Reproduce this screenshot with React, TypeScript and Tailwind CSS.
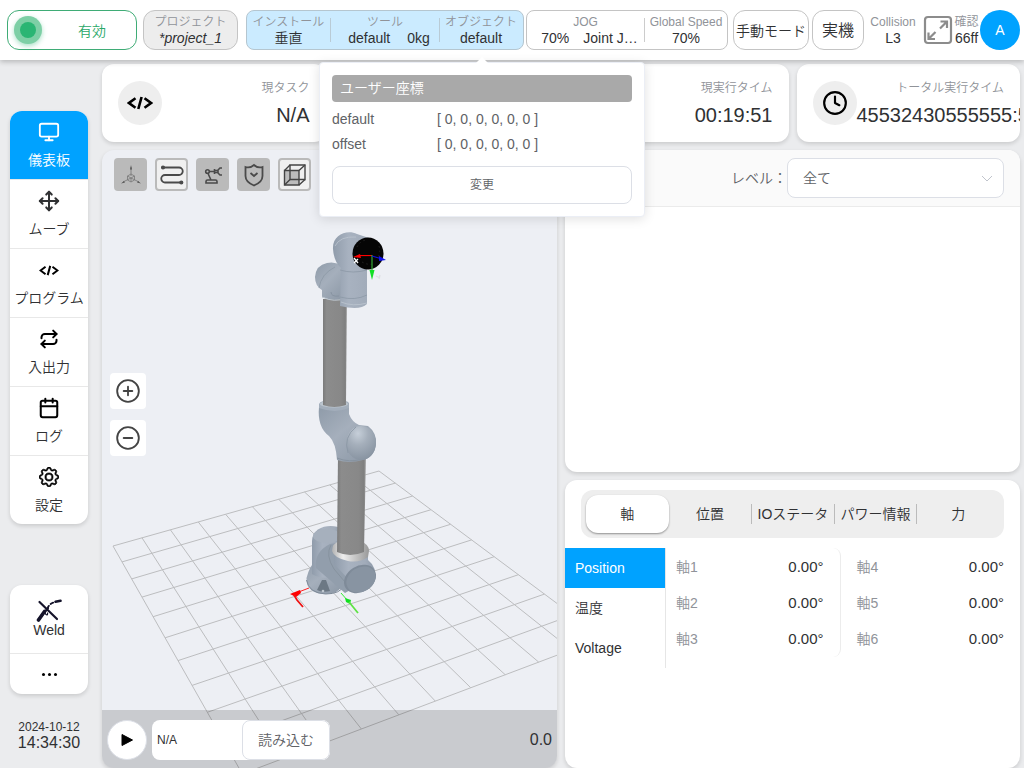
import type { ReactNode } from "react";
import { Monitor, Move, Repeat, Calendar, Clock, CirclePlus, CircleMinus } from "lucide-react";
import { BsGear } from "react-icons/bs";

function CodeIcon({ className }: { className: string }) {
  return (
    <svg viewBox="0 0 26 14" className={className} fill="none" stroke="currentColor" strokeWidth="2.6">
      <path d="M8.500 2.200 2 7l6.500 4.800M17.500 2.200 24 7l-6.500 4.800M14.600 1 11.300 13" />
    </svg>
  );
}

function WeldIcon() {
  return (
    <svg viewBox="0 0 26 23" className="h-[23px] w-[26px]" fill="none" stroke="#15142b" strokeLinecap="round">
      <path d="m2.500 21 6-8.500" strokeWidth="3.600" />
      <path d="M9 14c1.500 3 3 2 2.500 0" strokeWidth="1.200" />
      <path d="M11.500 9.500c1.500-4 4-5.500 7.500-6.500" strokeWidth="1.800" strokeDasharray="3 2.500" />
      <path d="m19.500 2.800 5-1" strokeWidth="2.600" />
      <path d="m3.500 3 17.500 17M2.500 20.500 12 9" strokeWidth="2.200" />
    </svg>
  );
}

function ExpandIcon() {
  return (
    <svg viewBox="0 0 30 30" className="h-[30px] w-[30px] shrink-0" fill="none" stroke="#8c8c8c" strokeWidth="2.200">
      <rect x="2" y="2" width="26" height="26" rx="3" />
      <path d="M17.500 6.500h6.500v6.500M24 6.500l-7 7M5.500 17.500v6.500h6.500M5.500 24l7-7" />
    </svg>
  );
}

function AxesIcon() {
  return (
    <svg viewBox="0 0 24 24" className="h-6 w-6" fill="none" stroke="#777" strokeWidth=".8">
      <path d="M12 13V4M12 15l-8 4M12 15l8 4" />
      <path d="m12 11 3.500 2v4L12 19l-3.500-2v-4zM8.500 13l3.500 2 3.500-2M12 15v4" />
      <path d="m12 2-1 4.500h2zM2 20.500l4-1-1-1.600zM22 20.500l-4-1 1-1.600z" fill="#555" stroke="none" />
    </svg>
  );
}

function PathIcon() {
  return (
    <svg viewBox="0 0 24 24" className="h-6 w-6" fill="none" stroke="#4a4a4a" strokeWidth="1.800">
      <path d="M3 4.500h16a3.400 3.400 0 0 1 0 7.500H5a3.400 3.400 0 0 0 0 7.500h16" />
      <circle cx="3" cy="4.500" r="1.200" fill="#4a4a4a" />
      <circle cx="21.300" cy="19.500" r="1.200" fill="#4a4a4a" />
    </svg>
  );
}

function ArmIcon() {
  return (
    <svg viewBox="0 0 24 24" className="h-6 w-6" fill="none" stroke="#4a4a4a" strokeWidth="1.600">
      <circle cx="6.500" cy="8.500" r="1.800" />
      <path d="M8.500 8.500h4.500M13.500 6v5M14 7.500h2.500M14 9.500h2.500M21 5h-2l-2 2v3l2 2h2M7 10.500 10 17M5 20v-1.500q0-1.500 1.500-1.500h8q1.500 0 1.500 1.500v1.500z" />
    </svg>
  );
}

function ShieldIcon() {
  return (
    <svg viewBox="0 0 24 24" className="h-6 w-6" fill="none" stroke="#4a4a4a" strokeWidth="1.800">
      <path d="M3.500 4q4.500 1.500 8.500-2 4 3.500 8.500 2v9q0 6-8.500 9.500Q3.500 19 3.500 13z" />
      <path d="m8.500 10 3.500 3 3.500-3" />
    </svg>
  );
}

function CubeIcon() {
  return (
    <svg viewBox="0 0 24 24" className="h-6 w-6" fill="none" stroke="#444" strokeWidth="1.400">
      <path d="M1.500 7.500h14.500v14.500H1.500z" fill="#999" fillOpacity=".6" />
      <path d="M7 2h15v14.500H7z" />
      <path d="M1.500 7.500 7 2M16 7.500 22 2M1.500 22 7 16.500M16 22l6-5.500" />
    </svg>
  );
}

/* Perspective projection of the floor plane, u along the rear edge and v toward the viewer. */
function project(u: number, v: number) {
  const w = 1 + 0.0101 * u - 0.03256 * v;
  const x = (113 + 30.43 * u + 5.04 * v) / w;
  const y = (546 - 2.743 * u - 2.405 * v) / w;
  return `${x.toFixed(1)} ${y.toFixed(1)}`;
}

const floorPath = Array.from({ length: 11 }, (_, i) =>
  `M${project(i, 0)}L${project(i, 10)}M${project(0, i)}L${project(10, i)}`
).join("");

function RobotScene() {
  return (
    <svg
      viewBox="102 150 455 618"
      preserveAspectRatio="xMidYMax slice"
      className="absolute inset-0 h-full w-full"
      role="img"
      aria-label="robot"
    >
      <defs>
        <linearGradient id="tube" x1="0" x2="1">
          <stop offset="0" stopColor="#7b7b7b" />
          <stop offset=".15" stopColor="#8c8c8c" />
          <stop offset=".75" stopColor="#888" />
          <stop offset=".93" stopColor="#7f7f7f" />
          <stop offset="1" stopColor="#a5a5a5" />
        </linearGradient>
        <linearGradient id="shell" x1="0" x2="1">
          <stop offset="0" stopColor="#909cab" />
          <stop offset=".35" stopColor="#a8b2c0" />
          <stop offset=".75" stopColor="#a2acba" />
          <stop offset="1" stopColor="#8c98a8" />
        </linearGradient>
        <linearGradient id="elbow" x1="0" y1="0" x2=".9" y2="1">
          <stop offset="0" stopColor="#8f9ba9" />
          <stop offset=".45" stopColor="#a5afbc" />
          <stop offset="1" stopColor="#8b97a5" />
        </linearGradient>
        <radialGradient id="cap" cx=".4" cy=".22" r=".85">
          <stop offset="0" stopColor="#c6cfd9" />
          <stop offset=".4" stopColor="#a5afbb" />
          <stop offset="1" stopColor="#84909e" />
        </radialGradient>
        <linearGradient id="collar" x1="0" x2="1">
          <stop offset="0" stopColor="#b1b1b1" />
          <stop offset=".3" stopColor="#eee" />
          <stop offset=".6" stopColor="#c9c9c9" />
          <stop offset="1" stopColor="#999" />
        </linearGradient>
      </defs>

      <path d={floorPath} fill="none" stroke="#bcbdbf" strokeWidth="1" />

      {/* base */}
      <path d="M306.500 578q3-12 9-17h23q7 8 7 18-4 15-20 15-19 0-19-16z" fill="url(#elbow)" />
      <path d="M306.500 580q2 13 19 14 15 0 19-9" fill="none" stroke="#7e8a98" />
      <path d="m322 580-5 10q5 3 13 1l-4-11z" fill="#6c7884" />
      <circle cx="323" cy="591" r="1.300" fill="#c0c8d0" />
      <path d="M312 541c0-16 22-18 30-12v30l-5 16q-13 6-25-1z" fill="url(#shell)" />
      <ellipse cx="327" cy="536" rx="14" ry="7" fill="#a6b0bd" />
      <path d="M330 544q-16 8-14 24l29 25q16-8 22-20l-30-30z" fill="#929eac" />
      <path d="M334 552h34v8q9 7 7 20l-22 4-19-20z" fill="url(#shell)" />
      <path d="M331 545q-6 10 3 24l11 13" fill="none" stroke="#87939f" />
      <ellipse cx="360" cy="579" rx="17" ry="13" fill="#7f8b99" transform="rotate(-32 360 579)" />
      <ellipse cx="361" cy="579.500" rx="15.500" ry="12" fill="#8894a2" transform="rotate(-32 361 579.500)" />

      {/* lower arm */}
      <path d="M332 551q0-8 8-10h20q9 3 9 10l-1 6q-9 6-20 4-14-3-16-10z" fill="url(#collar)" />
      <path d="m338 455 28 1-2 96q-14 6-27 0z" fill="url(#tube)" />

      {/* elbow */}
      <path d="M319 407q14 5 30 0v7q3 8 10 11l9 1q9 7 8 18-2 14-13 16-14 4-26 0-1-17-8-24-12-9-10-29z" fill="url(#elbow)" />
      <path d="M337 458q12 5 26 1" fill="none" stroke="#8793a0" />
      <ellipse cx="361" cy="443" rx="15" ry="17" fill="url(#cap)" />
      <path d="M348 453q-5-16 8-26" fill="none" stroke="#8995a3" strokeWidth=".8" />
      <path d="M319 408v-4q1-4 15-4 14 0 15 3v5q-14 6-30 0z" fill="#a3aebb" />
      <ellipse cx="334" cy="404" rx="14" ry="3.500" fill="#bcc5ce" />

      {/* upper arm */}
      <path d="M323 299h24l-1 106q-12 4-23 0z" fill="url(#tube)" />
      <path d="M322 297v-7q-7-4-7-13 1-12 12-14 8-2 16 3l5 31q-12 6-26 0z" fill="url(#elbow)" />
      <path d="M322 297q12 6 25 1" fill="none" stroke="#bdc6cf" />
      <path d="M319 288q2-14 16-21" fill="none" stroke="#8a96a4" strokeWidth=".7" />
      <path d="M331 292q0 5 8 4" fill="none" stroke="#8793a1" />

      {/* wrist */}
      <path d="M333 249c-1-14 14-20 24-15l12 4 9 25-11 6v35q-7 7-27 2l1-38q-7-6-8-19z" fill="url(#shell)" />
      <path d="M341 302q12 5 26 1M335 246q5-10 21-9" fill="none" stroke="#bcc5cf" strokeWidth=".8" />
      <path d="M340 270q13 4 27 0M340 297q15 4 27-2" fill="none" stroke="#8c98a6" strokeWidth=".8" />
      <ellipse cx="368" cy="253.500" rx="15.500" ry="16" fill="#050505" />
      <path d="M357 247q3-6 9-7M379 246q2 8-2 13M362 262q7 4 13 1" fill="none" stroke="#242424" strokeDasharray="1.500 3" />

      {/* tool frame */}
      <path d="M372 255.500h-14" stroke="#f00" strokeWidth="1.200" />
      <path d="m353 257 7-3 1 4z" fill="#f00" />
      <path d="M372 255v17" stroke="#3a3" strokeWidth="1.200" />
      <path d="M369.500 270h5l-2.500 10z" fill="#12df24" />
      <path d="m372 256 10 3" stroke="#11d" strokeWidth="1.200" />
      <path d="m379 256 7 4-7 1z" fill="#11e" />
      <path d="m354 258 4 5m0-4-4 4" stroke="#fff" strokeWidth="1.300" />
      <path d="m376 276 4 2m0-3-1 4" stroke="#dedfe2" strokeWidth="1.300" />

      {/* base frame */}
      <path d="m309 588-13 5" stroke="#f22" />
      <path d="m290 594 10-4 1 3-5 4z" fill="#f00" />
      <path d="m294 595 3 5 6 7" stroke="#e11" strokeWidth="1.800" fill="none" />
      <path d="m341 593 7 8" stroke="#3e3" />
      <path d="m345 598 6 2-1 4-4-2z" fill="#10e020" />
      <path d="m349 602 9 11" stroke="#5de244" strokeWidth="1.800" />
    </svg>
  );
}

const shadow = "shadow-[0_2px_4px_rgba(0,0,0,0.14)]";

function Field({ label, children, className }: { label: string; children: ReactNode; className: string }) {
  return (
    <div className={`flex flex-col items-center whitespace-nowrap leading-4 ${className}`}>
      <span className="text-xs leading-4 text-[#909399]">{label}</span>
      <span className="text-sm leading-4">{children}</span>
    </div>
  );
}

function CoordinatePopover() {
  return (
    <div className="absolute top-[51px] -left-[121px] z-20 w-[326px] rounded border border-[#ebeef5] bg-white p-3 text-sm text-[#606266] shadow-[0_2px_12px_rgba(0,0,0,0.12)]">
      <svg viewBox="0 0 12 6" className="absolute -top-[6px] left-[156px] h-[6px] w-3">
        <path d="M0 6 6 0l6 6z" fill="#fff" />
      </svg>
      <h2 className="rounded bg-[#a9a9a9] px-2 py-1 text-sm leading-[19px] text-white">ユーザー座標</h2>
      <dl className="mt-[5px] grid grid-cols-[105px_1fr] leading-[25px]">
        <dt>default</dt>
        <dd>[ 0, 0, 0, 0, 0, 0 ]</dd>
        <dt>offset</dt>
        <dd>[ 0, 0, 0, 0, 0, 0 ]</dd>
      </dl>
      <button className="mt-[9px] h-[38px] w-full rounded-lg border border-[#dcdfe6] bg-white text-xs">変更</button>
    </div>
  );
}

function Header() {
  return (
    <header className="relative z-10 flex h-[60px] shrink-0 items-center bg-white pr-1 pl-[7px] shadow-[0_2px_5px_rgba(0,0,0,0.22)]">
      <button className="mr-1.5 flex h-10 w-[130px] shrink-0 items-center rounded-xl border border-[#3fac76] pl-1.5 text-sm text-[#2aa868]">
        <span className="flex h-7 w-7 items-center justify-center rounded-full bg-[#7dcfa5] shadow-[0_2px_5px_rgba(42,181,115,0.4)]">
          <span className="h-4 w-4 rounded-full bg-[#2ab573]" />
        </span>
        <span className="flex-1 pt-0.5 pl-1.5 text-center">有効</span>
      </button>
      <button className="mr-2 flex h-10 w-[95px] shrink-0 flex-col items-center justify-center rounded-xl border border-[#c4c4c4] bg-[#ededed]">
        <span className="text-xs leading-4 text-[#909399]">プロジェクト</span>
        <span className="text-sm leading-4 italic">*project_1</span>
      </button>
      <div className="mr-0.5 flex h-10 min-w-[278px] flex-1 items-center rounded-lg border border-[#b5c6d0] bg-[#cbebff]">
        <Field label="インストール" className="w-[83px] shrink-0">垂直</Field>
        <span className="h-6 w-px bg-[#b9cbd6]" />
        <Field label="ツール" className="flex-1">
          <span className="flex gap-[17px] pl-2"><span>default</span><span>0kg</span></span>
        </Field>
        <span className="h-6 w-px bg-[#b9cbd6]" />
        <div className="relative flex h-full w-[83px] shrink-0 items-center pl-[5px]">
          <Field label="オブジェクト" className="">default</Field>
          <CoordinatePopover />
        </div>
      </div>
      <div className="mr-[5px] flex h-10 w-[202px] shrink-0 items-center rounded-lg border border-[#c4c4c4]">
        <Field label="JOG" className="flex-1">
          <span className="flex gap-3.5 pl-2"><span>70%</span><span>Joint J…</span></span>
        </Field>
        <span className="h-6 w-px bg-[#ccc]" />
        <Field label="Global Speed" className="w-[82px]">70%</Field>
      </div>
      <button className="mr-[3px] h-10 w-[76px] shrink-0 rounded-xl border border-[#c4c4c4] pt-0.5 text-sm whitespace-nowrap">手動モード</button>
      <button className="mr-1.5 h-10 w-[52px] shrink-0 rounded-xl border border-[#c4c4c4] pt-0.5 text-base">実機</button>
      <Field label="Collision" className="mr-[7px] w-[46px] shrink-0">L3</Field>
      <button aria-label="fullscreen"><ExpandIcon /></button>
      <Field label="確認" className="w-[27px] shrink-0">66ff</Field>
      <button className="h-10 w-10 shrink-0 rounded-full bg-[#00a2ff] text-sm text-white">A</button>
    </header>
  );
}

const menu = [
  { label: "儀表板", icon: <Monitor className="h-[22px] w-[22px]" strokeWidth={2} /> },
  { label: "ムーブ", icon: <Move className="h-[22px] w-[22px]" strokeWidth={2.2} /> },
  { label: "プログラム", icon: <CodeIcon className="h-[11px] w-5 text-black" /> },
  { label: "入出力", icon: <Repeat className="h-5 w-5 text-black" strokeWidth={2.4} /> },
  { label: "ログ", icon: <Calendar className="h-[22px] w-[22px] text-black" strokeWidth={2.2} /> },
  { label: "設定", icon: <BsGear className="h-5 w-5 text-black" strokeWidth={0.5} /> },
];

function Sidebar() {
  return (
    <aside className="flex w-[102px] shrink-0 flex-col pr-3.5 pl-2.5">
      <nav className={`mt-[51px] overflow-hidden rounded-xl bg-white ${shadow}`}>
        {menu.map((item, i) => (
          <a
            key={item.label}
            href={`#${i}`}
            className={
              i === 0
                ? "flex h-[69px] flex-col items-center border-b border-[#e8e8e8] bg-[#00a2ff] pt-[7px] text-sm text-white"
                : "flex h-[69px] flex-col items-center border-b border-[#e8e8e8] pt-[7px] text-sm last:h-17 last:border-b-0"
            }
          >
            <span className="flex h-7 items-center">{item.icon}</span>
            <span className="mt-1 leading-5 whitespace-nowrap">{item.label}</span>
          </a>
        ))}
      </nav>
      <div className={`mt-[61px] overflow-hidden rounded-xl bg-white ${shadow}`}>
        <a href="#weld" className="flex h-[69px] flex-col items-center border-b border-[#e8e8e8] pt-3.5 text-sm">
          <WeldIcon />
          <span className="leading-4">Weld</span>
        </a>
        <button aria-label="more" className="flex h-10 w-full items-center justify-center gap-[3px]">
          <span className="h-[3px] w-[3px] rounded-full bg-black" />
          <span className="h-[3px] w-[3px] rounded-full bg-black" />
          <span className="h-[3px] w-[3px] rounded-full bg-black" />
        </button>
      </div>
      <div className="mt-[25px] text-center">
        <div className="text-xs leading-4">2024-10-12</div>
        <div className="text-base leading-4">14:34:30</div>
      </div>
    </aside>
  );
}

function InfoCard({ icon, label, value }: { icon?: ReactNode; label?: string; value?: string }) {
  return (
    <section className={`flex h-[78px] min-w-0 items-center overflow-hidden rounded-xl bg-white px-4 ${shadow}`}>
      {icon && <span className="flex h-11 w-11 shrink-0 items-center justify-center rounded-full bg-[#eee] text-black">{icon}</span>}
      <div className="min-w-0 flex-1 pt-0.5 text-right whitespace-nowrap">
        <div className="text-xs leading-5 text-[#909399]">{label}</div>
        <div className="mt-0.5 text-xl leading-[30px]">{value}</div>
      </div>
    </section>
  );
}

const tools = [
  { name: "axes", icon: <AxesIcon />, on: true },
  { name: "path", icon: <PathIcon />, on: false },
  { name: "arm", icon: <ArmIcon />, on: true },
  { name: "safety", icon: <ShieldIcon />, on: true },
  { name: "view", icon: <CubeIcon />, on: false },
];

function ScenePanel() {
  return (
    <section className={`relative flex flex-col overflow-hidden rounded-xl bg-[#edeff4] ${shadow}`}>
      <RobotScene />
      <div className="relative flex gap-2 p-3 pt-2">
        {tools.map((t) => (
          <button
            key={t.name}
            aria-label={t.name}
            className={
              t.on
                ? "flex h-[33px] w-[33px] items-center justify-center rounded-sm bg-[#bababa]"
                : "flex h-[33px] w-[33px] items-center justify-center rounded-sm border-2 border-[#bababa] bg-[#f0f0f0]"
            }
          >
            {t.icon}
          </button>
        ))}
      </div>
      <div className="relative flex flex-1 flex-col items-start justify-center gap-[11px] pb-21 pl-2 text-[#444]">
        <button aria-label="zoom in" className="flex h-9 w-9 items-center justify-center rounded bg-white">
          <CirclePlus className="h-[26px] w-[26px]" strokeWidth={1.7} />
        </button>
        <button aria-label="zoom out" className="flex h-9 w-9 items-center justify-center rounded bg-white">
          <CircleMinus className="h-[26px] w-[26px]" strokeWidth={1.7} />
        </button>
      </div>
      <div className="relative flex h-[58px] items-center gap-[5px] bg-black/15 px-[5px] pt-0.5">
        <button aria-label="play" className="flex h-10 w-10 items-center justify-center rounded-full border border-[#dcdfe6] bg-white">
          <svg viewBox="0 0 12 14" className="h-3.5 w-3"><path d="M1 1.500v11l10.500-5.500z" stroke="#000" strokeLinejoin="round" /></svg>
        </button>
        <div className="flex h-10 w-[178px] overflow-hidden rounded-lg bg-white">
          <input aria-label="file" defaultValue="N/A" className="min-w-0 flex-1 px-[5px] text-xs outline-none" />
          <button className="w-[88px] shrink-0 rounded-lg border border-[#dcdfe6] bg-white text-sm text-[#606266]">読み込む</button>
        </div>
        <span className="ml-auto text-base">0.0</span>
      </div>
    </section>
  );
}

function LogPanel() {
  return (
    <section className={`flex flex-col overflow-hidden rounded-xl bg-white ${shadow}`}>
      <div className="flex h-[57px] shrink-0 items-center justify-end border-b border-[#ebebeb] bg-[#fafafa] pr-4 text-sm text-[#606266]">
        <label htmlFor="level">レベル：</label>
        <span className="relative flex w-[217px] items-center">
          <select id="level" className="h-10 w-full appearance-none rounded-lg border border-[#dcdfe6] bg-white px-[15px] text-sm text-[#606266]">
            <option>全て</option>
          </select>
          <svg viewBox="0 0 12 7" className="pointer-events-none absolute right-[11px] h-[7px] w-3" fill="none" stroke="#c0c4cc">
            <path d="m1 1 5 5 5-5" />
          </svg>
        </span>
      </div>
    </section>
  );
}

function AxisTable({ start }: { start: number }) {
  return (
    <table className="mt-px w-full">
      <tbody>
        {[0, 1, 2].map((i) => (
          <tr key={i} className="h-9">
            <th className="text-left text-sm font-[350] text-[#909399]">{`軸${start + i}`}</th>
            <td className="text-right text-[15px]">0.00°</td>
          </tr>
        ))}
      </tbody>
    </table>
  );
}

function AxisPanel() {
  return (
    <section className={`overflow-hidden rounded-xl bg-white pt-2.5 ${shadow}`}>
      <div className="mx-4 grid h-12 grid-cols-5 items-center rounded-xl bg-[#eee] px-[5px] text-sm whitespace-nowrap">
        <button className="h-[38px] rounded-xl bg-white shadow-[0_1px_2px_rgba(0,0,0,0.4)]">軸</button>
        <button className="h-5">位置</button>
        <button className="h-5 border-l border-[#bbb] px-1">IOステータ</button>
        <button className="h-5 border-l border-[#bbb] px-1">パワー情報</button>
        <button className="h-5 border-l border-[#bbb]">力</button>
      </div>
      <div className="mt-2.5 flex items-start">
        <div className="flex w-[101px] shrink-0 flex-col border-r border-[#e6e6e6] text-sm">
          <button className="h-10 bg-[#00a2ff] px-2.5 text-left text-white">Position</button>
          <button className="h-10 px-2.5 text-left">温度</button>
          <button className="h-10 px-2.5 text-left">Voltage</button>
        </div>
        <div className="min-w-0 flex-1 rounded-lg border-r border-[#ececec] pr-4 pl-2.5">
          <AxisTable start={1} />
        </div>
        <div className="min-w-0 flex-1 pr-4 pl-4">
          <AxisTable start={4} />
        </div>
      </div>
    </section>
  );
}

export default function App() {
  return (
    <div className="flex min-h-screen flex-col bg-[#ebecee] font-['Liberation_Sans','Noto_Sans_CJK_JP',sans-serif] font-[350] text-[#303133]">
      <Header />
      <div className="flex flex-1">
        <Sidebar />
        <main className="flex min-w-0 flex-1 flex-col gap-2 pt-1 pr-1">
          <div className="grid grid-cols-4 gap-2">
            <InfoCard icon={<CodeIcon className="h-3.5 w-[26px]" />} label="現タスク" value="N/A" />
            <InfoCard />
            <InfoCard label="現実行タイム" value="00:19:51" />
            <InfoCard icon={<Clock className="h-[26px] w-[26px]" />} label="トータル実行タイム" value="45532430555555:5" />
          </div>
          <div className="grid flex-1 grid-cols-2 gap-2">
            <ScenePanel />
            <div className="grid grid-rows-[322fr_288fr] gap-2">
              <LogPanel />
              <AxisPanel />
            </div>
          </div>
        </main>
      </div>
    </div>
  );
}
